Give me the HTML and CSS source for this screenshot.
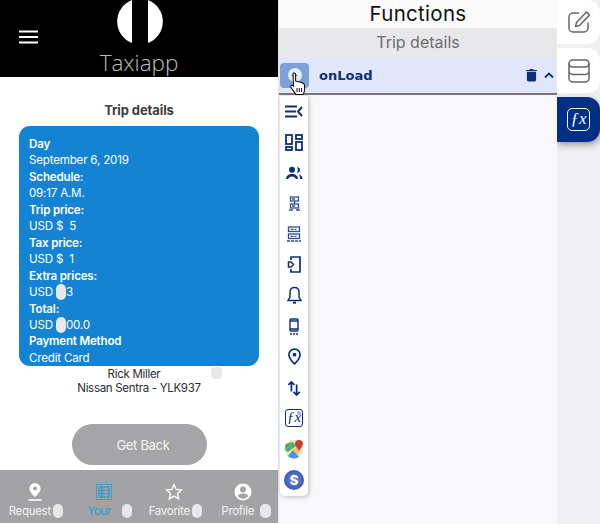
FILE: index.html
```html
<!DOCTYPE html>
<html lang="en">
<head>
  <meta charset="UTF-8">
  <title>Taxiapp functions</title>
  <link rel="stylesheet" href="styles.css">
</head>
<body>
  <div class="phone">
    <header class="top">
      <svg class="burger" width="20" height="14" viewBox="0 0 20 14"><path d="M0 1.500h19M0 7h19M0 12.500h19" stroke="#fff" stroke-width="2"/></svg>
      <svg class="logo" width="46" height="43" viewBox="0 0 46 43">
        <path d="M15 0A23 23 0 0 0 15 43Z" fill="#fff"/>
        <path d="M31 0A23 23 0 0 1 31 43Z" fill="#fff"/>
      </svg>
      <div class="brand">Taxiapp</div>
    </header>

    <main class="trip">
      <h1>Trip details</h1>
      <section class="card">
        <b>Day</b>
        <span>September 6, 2019</span>
        <b>Schedule:</b>
        <span>09:17 A.M.</span>
        <b>Trip price:</b>
        <span>USD $&nbsp;&nbsp;5</span>
        <b>Tax price:</b>
        <span>USD $&nbsp;&nbsp;1</span>
        <b>Extra prices:</b>
        <span>USD <i class="blank card-blank"></i>3</span>
        <b>Total:</b>
        <span>USD <i class="blank card-blank"></i>00.0</span>
        <b>Payment Method</b>
        <span>Credit Card</span>
      </section>
      <div class="driver">
        <div class="driver-name">Rick Miller</div>
        <div>Nissan Sentra - YLK937</div>
        <i class="blank driver-blank"></i>
      </div>
      <button class="back">Get Back</button>
    </main>

    <nav class="tabs">
      <div class="tab">
        <svg width="20" height="20" viewBox="0 0 20 20"><path d="M10 1a5.600 5.600 0 0 0-5.600 5.600C4.400 10.500 10 15 10 15s5.600-4.500 5.600-8.400A5.600 5.600 0 0 0 10 1zm0 7.400a2 2 0 1 1 0-4 2 2 0 0 1 0 4z" fill="#fff"/><path d="M3.500 18h13" stroke="#fff" stroke-width="1.600"/></svg>
        <div class="tab-label request">Request<i class="blank tab-blank"></i></div>
      </div>
      <div class="tab tab-on">
        <svg width="20" height="20" viewBox="0 0 20 20" fill="none" stroke="#1d9bd8" stroke-width="1.100"><rect x="2.500" y="2.500" width="15" height="15" stroke-dasharray="1.300 .7"/><rect x="5" y="5" width="10" height="10"/><path d="M5 8.300h10M5 11.700h10M8 5v10"/></svg>
        <div class="tab-label">Your<i class="blank tab-blank wide"></i></div>
      </div>
      <div class="tab">
        <svg width="20" height="20" viewBox="0 0 20 20"><path d="M10 2.500l2.200 5 5.300.5-4 3.600 1.200 5.300L10 14.100l-4.700 2.800 1.200-5.300-4-3.600 5.300-.5z" fill="none" stroke="#fff" stroke-width="1.300"/></svg>
        <div class="tab-label favorite">Favorite<i class="blank tab-blank"></i></div>
      </div>
      <div class="tab">
        <svg width="20" height="20" viewBox="0 0 20 20"><path d="M10 1.500a8.500 8.500 0 1 0 0 17 8.500 8.500 0 0 0 0-17zm0 3a3 3 0 1 1 0 6 3 3 0 0 1 0-6zm0 12.200c-2.200 0-4.100-1-5.200-2.600.1-1.700 3.500-2.600 5.200-2.600s5.100.9 5.200 2.600c-1.100 1.600-3 2.600-5.200 2.600z" fill="#fff"/></svg>
        <div class="tab-label profile">Profile<i class="blank tab-blank"></i></div>
      </div>
    </nav>
  </div>

  <div class="editor">
    <h2>Functions</h2>
    <div class="screen-name">Trip details</div>
    <div class="fn-row">
      <span class="add"><span class="add-dot">+</span></span>
      <span class="fn-name">onLoad</span>
      <svg class="trash" width="11" height="14" viewBox="0 0 12 14"><path d="M1 3.500h10V12.500a1.500 1.500 0 0 1-1.500 1.500h-7A1.500 1.500 0 0 1 1 12.500zM0 1.500h3.500L4.500.5h3l1 1H12v1.200H0z" fill="#0b2f7e"/></svg>
      <svg class="chev" width="10" height="7" viewBox="0 0 10 7"><path d="M1 5.500l4-4 4 4" fill="none" stroke="#0b2f7e" stroke-width="1.800"/></svg>
    </div>

    <svg class="cursor" width="18" height="24" viewBox="0 0 18 24">
      <path d="M4 2.200c0-1.600 2.600-1.600 2.600 0V9l6 1.500c2 .5 3 1.500 3 3.500v3.500c0 2-1 4-1.600 5H7c-1-1.800-3.400-4.500-5-7-1-1.600.6-3 2-1.800l.6.600z" fill="#fff" stroke="#111" stroke-width="1.100" stroke-linejoin="round"/>
      <path d="M8 16v4M10.300 16v4M12.600 16v4" stroke="#111" stroke-width="1"/>
    </svg>

    <div class="tools">
      <svg width="18" height="13" viewBox="0 0 18 13"><path d="M0 1.500h12M0 6.500h11M0 11.500h12M17 2l-4 4.500 4 4.500" fill="none" stroke="#0b2f7e" stroke-width="2"/></svg>
      <svg width="18" height="17" viewBox="0 0 18 17" fill="none" stroke="#0b2f7e" stroke-width="1.800"><rect x="1" y="1" width="6" height="9"/><rect x="11" y="1" width="6" height="4"/><rect x="1" y="13" width="6" height="3"/><rect x="11" y="8" width="6" height="8"/></svg>
      <svg width="18" height="14" viewBox="0 0 18 14" fill="#0b2f7e"><circle cx="7" cy="3.800" r="3"/><path d="M12 1c2 .3 3 1.500 3 3s-1 2.700-3 3c1-1.800 1-4.200 0-6zM1 13c0-3 2.500-5 6-5s6 2 6 5h-2.200c-.4-1.500-2-2.600-3.800-2.600S3.600 11.500 3.200 13zM14 8.500c2 .4 3.500 2 3.500 4.500h-2.400c0-1.800-.4-3.200-1.100-4.500z"/></svg>
      <svg width="11" height="15" viewBox="0 0 11 15" fill="none" stroke="#2b4d95" stroke-width="1.300"><rect x="1.500" y="1" width="8" height="4"/><rect x="1.500" y="8" width="8" height="4"/><path d="M5.500 5v3M3 3h3M3 10h3M0 14h4M7 14h4"/></svg>
      <svg width="14" height="16" viewBox="0 0 14 16" fill="none" stroke="#2b4d95" stroke-width="1.300"><rect x="1.500" y="1" width="11" height="4.500"/><rect x="1.500" y="8" width="11" height="4.500"/><path d="M3.500 3.300h6M3.500 10.300h6M0 15h14" stroke-dasharray="3 1"/></svg>
      <svg width="14" height="17" viewBox="0 0 14 17" fill="none" stroke="#0b2f7e" stroke-width="1.700"><path d="M4 4V1h9v15H4v-3"/><path d="M4 6l2.500 2.500L4 11H1.500V6z" stroke-width="1.500"/></svg>
      <svg width="15" height="18" viewBox="0 0 15 18" fill="none" stroke="#0b2f7e" stroke-width="1.500"><path d="M7.500 1.500c-3 0-4.500 2.300-4.500 5V11L1 14.500h13L12 11V6.500c0-2.700-1.500-5-4.500-5z"/><path d="M6 16.700h3" stroke-width="2"/></svg>
      <svg width="10" height="17" viewBox="0 0 10 17" fill="none" stroke="#0b2f7e" stroke-width="1.400"><rect x="1" y="1" width="8" height="12" rx="1"/><path d="M1 3h8M1 11h8"/><path d="M1 16h8" stroke-dasharray="2 1"/></svg>
      <svg width="13" height="17" viewBox="0 0 14 18"><path d="M7 1a6 6 0 0 0-6 6c0 4 6 10 6 10s6-6 6-10a6 6 0 0 0-6-6z" fill="none" stroke="#0b2f7e" stroke-width="1.800"/><circle cx="7" cy="7" r="2" fill="#0b2f7e"/></svg>
      <svg width="14" height="18" viewBox="0 0 16 18" fill="none" stroke="#0b2f7e" stroke-width="2"><path d="M5 13V2M1.500 5.500L5 2l3.500 3.500M11 5v12M7.500 13.500L11 17l3.500-3.500"/></svg>
      <span class="fx-box">ƒx<i class="fx-dot"></i></span>
      <svg width="20" height="20" viewBox="0 0 20 20">
        <circle cx="10" cy="10" r="9.500" fill="#e9e5d3"/>
        <path d="M1 11L9 2.500 1.500 5.500z" fill="#3fa35b"/>
        <path d="M4 17l5-6 6 7a9 9 0 0 1-11-1z" fill="#4a8fe3"/>
        <path d="M1 11l8-8 3 4-8 6z" fill="#4caf65"/>
        <path d="M15 1c-3 0-4 2-4 3.500 0 2.500 4 7.500 4 7.500s4-5 4-7.500C19 3 18 1 15 1z" fill="#cf3b30"/>
        <path d="M9 11l3.500-3 3 5-2 3z" fill="#f1c542"/>
      </svg>
      <span class="coin">S</span>
    </div>
  </div>

  <aside class="rail">
    <div class="rail-btn first">
      <svg width="26" height="26" viewBox="0 0 26 26" fill="none" stroke="#666" stroke-width="1.500"><path d="M22 13.500V19a4 4 0 0 1-4 4H7a4 4 0 0 1-4-4V8a4 4 0 0 1 4-4h6"/><path d="M10.500 13.500L20.500 3l3 3-10 10.500-4 1z" stroke-linejoin="round"/></svg>
    </div>
    <div class="rail-btn">
      <svg width="24" height="26" viewBox="0 0 24 26" fill="none" stroke="#666" stroke-width="1.500"><rect x="2" y="2" width="20" height="7" rx="3.500"/><path d="M2 5.500v15c0 2 2 3.500 4 3.500h12c2 0 4-1.500 4-3.500v-15M2 9.500V13c0 2 2 3.500 4 3.500h12c2 0 4-1.500 4-3.500V9.500"/></svg>
    </div>
    <div class="rail-btn rail-on">
      <span class="fx-rail">ƒx</span>
    </div>
  </aside>
</body>
</html>
```

FILE: styles.css
```css
* {
  box-sizing: border-box;
}
html, body {
  height: 100%;
}
body {
  margin: 0;
  width: 600px;
  height: 524px;
  overflow: hidden;
  display: flex;
  background: #fff;
  font-family: Inter, "Liberation Sans", sans-serif;
}
.phone {
  width: 278px;
  height: 524px;
  display: flex;
  flex-direction: column;
  background: #fff;
}
.top {
  position: relative;
  height: 77px;
  background: #000;
  flex-shrink: 0;
}
.burger {
  position: absolute;
  left: 19px;
  top: 30px;
}
.logo {
  position: absolute;
  left: 117px;
  top: 0;
}
.brand {
  position: absolute;
  left: 0;
  right: 0;
  top: 48px;
  text-align: center;
  font-family: "Open Sans", sans-serif;
  font-weight: 300;
  font-size: 22.500px;
  line-height: 30px;
  color: #bdbdbd;
}
.trip {
  flex: 1;
  display: flex;
  flex-direction: column;
  align-items: center;
}
.trip h1 {
  margin: 25px 0 7px;
  font-size: 13px;
  line-height: 17px;
  font-weight: 700;
  letter-spacing: -.1px;
  color: #3c3c40;
}
.card {
  width: 240px;
  height: 240px;
  padding: 10px 10px 0;
  background: #1583d3;
  border-radius: 11px;
  color: #fff;
  font-size: 11.600px;
  letter-spacing: -.2px;
  overflow: hidden;
}
.card b, .card span {
  display: block;
  line-height: 16.450px;
  white-space: nowrap;
}
.card b {
  font-weight: 600;
}
.blank {
  display: inline-block;
  background: #e8e8ea;
  border-radius: 5px;
}
.card-blank {
  width: 10px;
  height: 16px;
  vertical-align: -4px;
}
.driver {
  position: relative;
  width: 100%;
  text-align: center;
  font-size: 11.500px;
  letter-spacing: -.3px;
  line-height: 13.500px;
  color: #2b2b2e;
  margin-top: 2px;
}
.driver-name {
  padding-right: 10px;
}
.driver-blank {
  position: absolute;
  left: 211px;
  top: -1px;
  width: 11px;
  height: 12px;
  border-radius: 4px;
}
.back {
  margin-top: 29px;
  width: 135px;
  height: 41px;
  border: none;
  border-radius: 21px;
  padding: 0 0 0 8px;
  background: #a5a4a6;
  color: #f4f4f4;
  font-family: inherit;
  font-size: 13px;
  letter-spacing: -.3px;
}
.tabs {
  height: 53px;
  margin-bottom: 1px;
  background: #a3a2a4;
  display: flex;
  flex-shrink: 0;
  padding-top: 12px;
}
.tab {
  flex: 1;
  display: flex;
  flex-direction: column;
  align-items: center;
  color: #f4f4f4;
}
.tab-on {
  color: #1d9bd8;
}
.tab-label {
  margin-top: 2px;
  font-size: 11.500px;
  letter-spacing: -.3px;
  line-height: 14px;
  white-space: nowrap;
}
.tab-on .tab-label {
  margin-left: 11px;
}
.tab-label.request {
  margin-left: 2px;
}
.tab-label.favorite {
  margin-left: 3px;
}
.tab-label.profile {
  margin-left: 6px;
}
.tab-label.profile .tab-blank {
  width: 11px;
  margin-left: 6px;
}
.tab-blank {
  width: 10px;
  height: 14px;
  vertical-align: -3px;
  margin-left: 2px;
}
.tab-blank.wide {
  margin-left: 11px;
}
.editor {
  position: relative;
  width: 279px;
  height: 524px;
  background: #f8f8fa;
  border-left: 1px solid #e6e6e8;
}
.editor h2 {
  margin: 0;
  height: 28px;
  background: #fbfbfc;
  text-align: center;
  font-size: 20.500px;
  letter-spacing: .3px;
  line-height: 27px;
  font-weight: 400;
  color: #111;
}
.screen-name {
  height: 29px;
  background: #e8e8ea;
  text-align: center;
  font-size: 16px;
  line-height: 28px;
  color: #6d6d70;
}
.fn-row {
  height: 38px;
  display: flex;
  align-items: center;
  background: #e1e6fa;
  border-bottom: 2px solid #77777d;
}
.add {
  width: 29px;
  height: 25px;
  background: #7da0d9;
  border-radius: 4px;
  margin-left: 1px;
  display: flex;
  align-items: center;
  justify-content: center;
}
.add-dot {
  width: 14px;
  height: 14px;
  border-radius: 50%;
  background: #e6ecf8;
  color: #4f79c0;
  font-size: 12px;
  line-height: 13px;
  text-align: center;
}
.fn-name {
  flex: 1;
  margin-left: 10px;
  font-family: "DejaVu Sans", sans-serif;
  font-size: 13px;
  font-weight: 700;
  color: #0b2f7e;
}
.trash {
  margin-right: 7px;
}
.chev {
  margin-right: 3px;
}
.cursor {
  position: absolute;
  left: 10px;
  top: 72px;
}
.tools {
  position: absolute;
  left: 1px;
  top: 96px;
  width: 28px;
  height: 400px;
  background: #fff;
  border-radius: 0 0 5px 5px;
  box-shadow: 1px 1px 4px rgba(0, 0, 0, .25);
  display: grid;
  grid-template-rows: repeat(13, 30.700px);
  justify-items: center;
  align-items: center;
}
.fx-box {
  position: relative;
  width: 18px;
  height: 18px;
  border: 1.500px solid #0b2f7e;
  border-radius: 3px;
  color: #0b2f7e;
  font-family: "Liberation Serif", serif;
  font-style: italic;
  font-size: 15px;
  line-height: 15px;
  text-align: center;
}
.fx-dot {
  position: absolute;
  right: 1px;
  top: 1px;
  width: 4px;
  height: 4px;
  border-radius: 50%;
  background: #9fb2d6;
}
.coin {
  width: 20px;
  height: 20px;
  border-radius: 50%;
  background: radial-gradient(circle at 50% 50%, #7f93d8 0, #3f5fc0 60%, #2f4aa8 100%);
  color: #fff;
  font-size: 13px;
  font-weight: 800;
  line-height: 20px;
  text-align: center;
}
.rail {
  width: 43px;
  height: 524px;
  background: #efeff1;
  display: flex;
  flex-direction: column;
  gap: 4px;
}
.rail-btn {
  width: 43px;
  height: 45px;
  background: #fff;
  border-radius: 0 13px 13px 0;
  display: flex;
  align-items: center;
  justify-content: center;
}
.rail-btn.first {
  height: 44px;
}
.rail-on {
  background: #002f86;
  box-shadow: 1px 3px 6px rgba(0, 0, 0, .35);
}
.fx-rail {
  width: 23px;
  height: 23px;
  border: 1.500px solid #fff;
  border-radius: 5px;
  color: #fff;
  font-family: "Liberation Serif", serif;
  font-style: italic;
  font-size: 17px;
  line-height: 20px;
  text-align: center;
}
```
